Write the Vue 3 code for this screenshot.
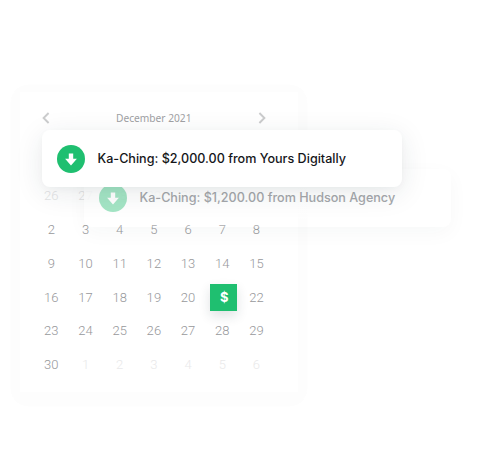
<script setup>
const row0 = ['26', '27', '28', '29', '30', '31', '1']
const days = [
  ...row0.map((n) => ({ n, kind: 'past' })),
  ...Array.from({ length: 29 }, (_, i) => ({ n: String(i + 2), kind: i + 2 === 21 ? 'paid' : 'day' })),
  ...['1', '2', '3', '4', '5', '6'].map((n) => ({ n, kind: 'next' })),
]
const notices = [
  { text: 'Ka-Ching: $1,200.00 from Hudson Agency', cls: 'back' },
  { text: 'Ka-Ching: $2,000.00 from Yours Digitally', cls: 'front' },
]
</script>

<template>
  <main class="stage">
    <div class="halo">
      <section class="calendar">
        <header class="head">
          <svg class="chev" viewBox="0 0 8 12"><path d="M6.6 1 1.6 6l5 5" /></svg>
          <h1 class="month">December 2021</h1>
          <svg class="chev" viewBox="0 0 8 12"><path d="M1.4 1l5 5-5 5" /></svg>
        </header>
        <div class="grid">
          <div v-for="(d, i) in days" :key="i" class="cell" :class="d.kind">
            <span v-if="d.kind === 'paid'" class="badge">$</span>
            <template v-else>{{ d.n }}</template>
          </div>
        </div>
      </section>
    </div>
    <article v-for="n in notices" :key="n.cls" class="notice" :class="n.cls">
      <svg class="coin" viewBox="0 0 28 28">
        <circle cx="14" cy="14" r="14" />
        <path d="M11.8 8.5h4.4v5.3h3.7L14 20.4l-5.9-6.6h3.7z" />
      </svg>
      <span class="label">{{ n.text }}</span>
    </article>
  </main>
</template>

<style>
body {
  background: #fff;
}
</style>

<style scoped>
.stage {
  position: relative;
  box-sizing: border-box;
  width: 480px;
  height: 472px;
  padding: 85px 0 0 11px;
  overflow: hidden;
}
.halo {
  box-sizing: border-box;
  width: 296px;
  height: 321px;
  padding: 7px 9px 0;
  border-radius: 18px;
  background: #fdfdfd;
  box-shadow: 0 0 3px #fdfdfd;
}
.calendar {
  box-sizing: border-box;
  width: 278px;
  height: 300px;
  padding: 19px 8px 0 14px;
  background: #fff;
}
.head {
  display: flex;
  align-items: center;
  justify-content: space-between;
  height: 14px;
  padding: 0 24.5px 0 8px;
}
.chev {
  width: 8px;
  height: 12px;
  fill: none;
  stroke: #cbcccd;
  stroke-width: 1.9;
}
.month {
  margin: 0;
  font: 400 10.2px/14px "Noto Sans", sans-serif;
  letter-spacing: 0;
  color: #a0a1a4;
}
.grid {
  display: grid;
  grid-template-columns: repeat(7, 34.2px);
  grid-auto-rows: 33.9px;
  margin-top: 53.9px;
}
.cell {
  display: flex;
  align-items: center;
  justify-content: center;
  padding-left: 0.5px;
  font: 300 13px/16px Roboto, sans-serif;
  letter-spacing: 0.1px;
  color: #97989b;
}
.past {
  color: #e3e4e5;
}
.next {
  color: #e9e9ea;
}
.badge {
  width: 27px;
  height: 27px;
  margin-left: 3px;
  background: #1fbf70;
  box-shadow: 0 5px 12px rgba(30, 50, 55, 0.14);
  font: 700 13px/27px Inter, sans-serif;
  text-indent: 1px;
  text-align: center;
  color: #fff;
}
.notice {
  position: absolute;
  box-sizing: border-box;
  display: flex;
  align-items: center;
  gap: 12.5px;
  border-radius: 8px;
  white-space: nowrap;
  font: 500 12.6px/18px Inter, sans-serif;
}
.front {
  left: 42px;
  top: 130px;
  width: 360px;
  height: 57px;
  padding-left: 15px;
  background: #fff;
  color: #15161a;
  box-shadow: 0 6px 28px rgba(30, 50, 55, 0.1), 0 2px 6px rgba(30, 50, 55, 0.03);
}
.back {
  left: 84px;
  top: 169px;
  width: 367px;
  height: 58px;
  padding-left: 15px;
  background: linear-gradient(rgba(255, 255, 255, 0.85) 75%, rgba(255, 255, 255, 0.2) 88%);
  color: #a5a7ab;
  box-shadow: 0 6px 20px rgba(30, 50, 55, 0.035);
}
.coin {
  flex: none;
  width: 28px;
  height: 28px;
}
.coin circle {
  fill: #1fbf70;
}
.coin path {
  fill: #fff;
}
.back .coin {
  opacity: 0.4;
}
</style>
